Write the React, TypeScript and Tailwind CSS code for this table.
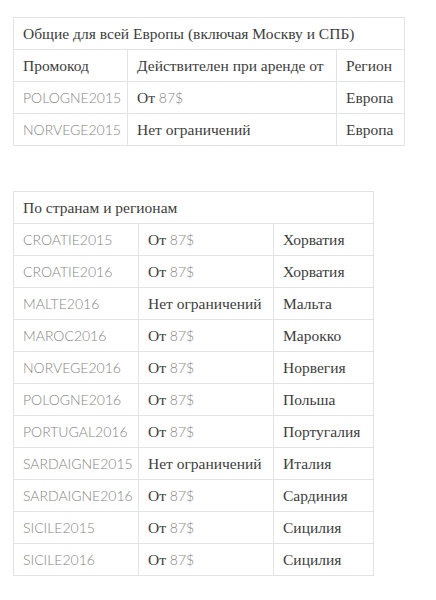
import React from 'react';

const europe = [
  { code: 'POLOGNE2015', price: true, region: 'Европа' },
  { code: 'NORVEGE2015', price: false, region: 'Европа' },
];

const countries = [
  { code: 'CROATIE2015', price: true, region: 'Хорватия' },
  { code: 'CROATIE2016', price: true, region: 'Хорватия' },
  { code: 'MALTE2016', price: false, region: 'Мальта' },
  { code: 'MAROC2016', price: true, region: 'Марокко' },
  { code: 'NORVEGE2016', price: true, region: 'Норвегия' },
  { code: 'POLOGNE2016', price: true, region: 'Польша' },
  { code: 'PORTUGAL2016', price: true, region: 'Португалия' },
  { code: 'SARDAIGNE2015', price: false, region: 'Италия' },
  { code: 'SARDAIGNE2016', price: true, region: 'Сардиния' },
  { code: 'SICILE2015', price: true, region: 'Сицилия' },
  { code: 'SICILE2016', price: true, region: 'Сицилия' },
];

const serif = "[font-family:'Liberation_Serif','DejaVu_Serif',serif]";
const sans = "[font-family:Lato,'Open_Sans',sans-serif]";
const cell = `border border-[#e0e4e6] h-[32px] px-[9px] align-middle whitespace-nowrap ${serif}`;
const codeCell = `border border-[#e0e4e6] h-[32px] px-[9px] align-middle whitespace-nowrap ${sans} text-[14px] text-[#858585] font-light`;

function Price({ price }: { price: boolean }) {
  if (!price) return <span>Нет ограничений</span>;
  return (
    <span>
      От <span className={`${sans} text-[#858585] text-[14px] font-light`}>87$</span>
    </span>
  );
}

export default function App() {
  return (
    <div className="bg-white min-h-[600px] pt-[17px] pl-[13px] text-[15.5px] text-[#3d3d3d]">
      <table className="border-collapse table-fixed w-[391px]">
        <colgroup>
          <col className="w-[114px]" />
          <col className="w-[209px]" />
          <col className="w-[68px]" />
        </colgroup>
        <tbody>
          <tr>
            <td colSpan={3} className={cell}>
              Общие для всей Европы (включая Москву и СПБ)
            </td>
          </tr>
          <tr>
            <td className={cell}>Промокод</td>
            <td className={cell}>Действителен при аренде от</td>
            <td className={cell}>Регион</td>
          </tr>
          {europe.map((row) => (
            <tr key={row.code}>
              <td className={codeCell}>{row.code}</td>
              <td className={cell}>
                <Price price={row.price} />
              </td>
              <td className={cell}>{row.region}</td>
            </tr>
          ))}
        </tbody>
      </table>

      <table className="border-collapse table-fixed w-[360px] mt-[45px]">
        <colgroup>
          <col className="w-[125px]" />
          <col className="w-[135px]" />
          <col className="w-[100px]" />
        </colgroup>
        <tbody>
          <tr>
            <td colSpan={3} className={cell}>
              По странам и регионам
            </td>
          </tr>
          {countries.map((row) => (
            <tr key={row.code}>
              <td className={codeCell}>{row.code}</td>
              <td className={cell}>
                <Price price={row.price} />
              </td>
              <td className={cell}>{row.region}</td>
            </tr>
          ))}
        </tbody>
      </table>
    </div>
  );
}
